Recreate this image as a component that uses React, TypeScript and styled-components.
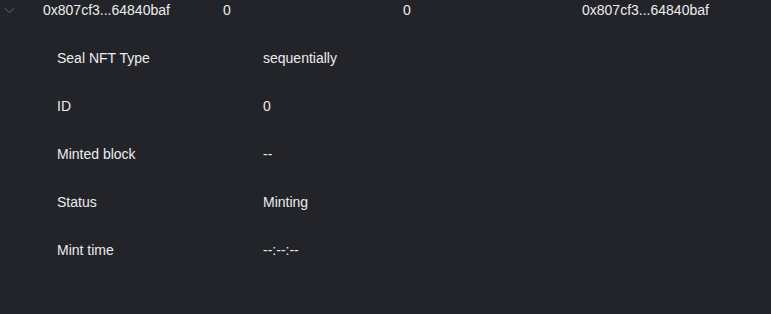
import styled, { createGlobalStyle } from 'styled-components'

const GlobalStyle = createGlobalStyle`
  html, body {
    margin: 0;
    padding: 0;
    background: #232429;
  }
  body {
    font-family: "Liberation Sans", Arial, sans-serif;
    color: #e6e6e6;
  }
`;

const Page = styled.section`
  width: 771px;
  height: 314px;
  background: #232429;
  overflow: hidden;
`;

const HeaderRow = styled.div`
  display: grid;
  grid-template-columns: 43px 180px 180px 179px 1fr;
  align-items: center;
  height: 19px;
  font-size: 14px;
  color: #ececec;
`;

const Toggle = styled.span`
  display: flex;
  align-items: center;
  padding-left: 4px;
  padding-top: 2px;
`;

const Cell = styled.span`
  white-space: nowrap;
`;

const Details = styled.ul`
  list-style: none;
  margin: 0;
  padding: 15px 0 0 57px;
`;

const Row = styled.li`
  display: grid;
  grid-template-columns: 206px 1fr;
  align-items: center;
  height: 48px;
  font-size: 14px;
  color: #ececec;
`;

const Chevron = () => (
  <svg width="11" height="7" viewBox="0 0 11 7" fill="none">
    <path d="M1 1.2 L5.5 5.4 L10 1.2" stroke="#4b4c52" strokeWidth="1.2" />
  </svg>
);

const details = [
  ['Seal NFT Type', 'sequentially'],
  ['ID', '0'],
  ['Minted block', '--'],
  ['Status', 'Minting'],
  ['Mint time', '--:--:--'],
];

export default function App() {
  return (
    <Page>
      <GlobalStyle />
      <HeaderRow>
        <Toggle><Chevron /></Toggle>
        <Cell>0x807cf3...64840baf</Cell>
        <Cell>0</Cell>
        <Cell>0</Cell>
        <Cell>0x807cf3...64840baf</Cell>
      </HeaderRow>
      <Details>
        {details.map(([label, value]) => (
          <Row key={label}>
            <span>{label}</span>
            <span>{value}</span>
          </Row>
        ))}
      </Details>
    </Page>
  )
}
